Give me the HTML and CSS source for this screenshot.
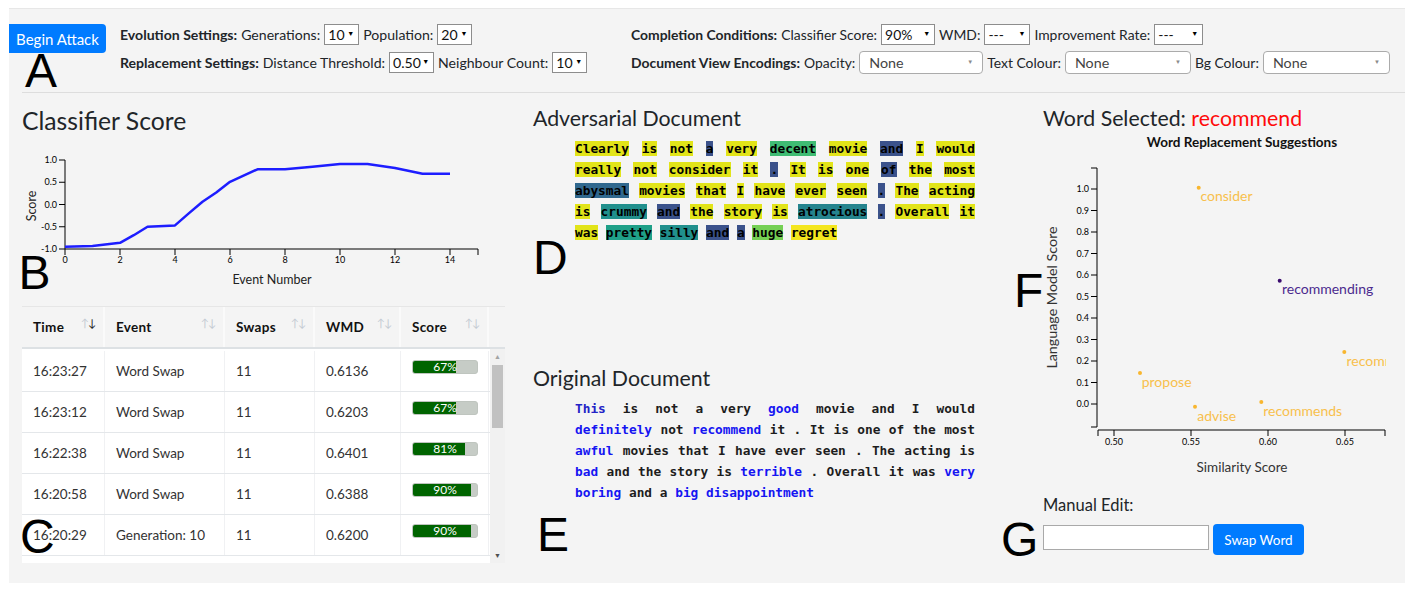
FILE: index.html
```html
<!DOCTYPE html>
<html lang="en">
<head>
<meta charset="utf-8">
<title>Adversarial Attack Dashboard</title>
<link rel="stylesheet" href="styles.css">
</head>
<body>
<div class="page">
  <header class="toolbar">
    <button class="btn btn-begin">Begin Attack</button>
    <div class="settings settings-left">
      <div class="setting-row">
        <b>Evolution Settings:</b><span>Generations:</span>
        <span class="sel w35">10<span class="caret">▼</span></span>
        <span>Population:</span>
        <span class="sel w35">20<span class="caret">▼</span></span>
      </div>
      <div class="setting-row">
        <b>Replacement Settings:</b><span>Distance Threshold:</span>
        <span class="sel w45">0.50<span class="caret">▼</span></span>
        <span>Neighbour Count:</span>
        <span class="sel w35">10<span class="caret">▼</span></span>
      </div>
    </div>
    <div class="settings settings-right">
      <div class="setting-row">
        <b>Completion Conditions:</b><span>Classifier Score:</span>
        <span class="sel w54">90%<span class="caret">▼</span></span>
        <span>WMD:</span>
        <span class="sel w46">---<span class="caret">▼</span></span>
        <span>Improvement Rate:</span>
        <span class="sel w49">---<span class="caret">▼</span></span>
      </div>
      <div class="setting-row">
        <b>Document View Encodings:</b><span>Opacity:</span>
        <span class="sel sel-round w124">None<span class="caret">▼</span></span>
        <span>Text Colour:</span>
        <span class="sel sel-round w126">None<span class="caret">▼</span></span>
        <span>Bg Colour:</span>
        <span class="sel sel-round w127">None<span class="caret">▼</span></span>
      </div>
    </div>
  </header>
  <div class="divider"></div>

  <main class="main">
    <section class="col col-left">
      <h2 class="heading heading-lg">Classifier Score</h2>
      <svg class="chart" width="483" height="150" viewBox="0 0 483 150">
        <g class="axis">
          <path d="M37,15 H43 V104 H37" fill="none" stroke="#000"/>
          <line x1="37" y1="37.25" x2="43" y2="37.25" stroke="#000"/>
          <line x1="37" y1="59.5" x2="43" y2="59.5" stroke="#000"/>
          <line x1="37" y1="81.75" x2="43" y2="81.75" stroke="#000"/>
          <text x="35" y="18" text-anchor="end">1.0</text>
          <text x="35" y="40.25" text-anchor="end">0.5</text>
          <text x="35" y="62.5" text-anchor="end">0.0</text>
          <text x="35" y="84.75" text-anchor="end">-0.5</text>
          <text x="35" y="107" text-anchor="end">-1.0</text>
          <path d="M43,110 V104 H456 V110" fill="none" stroke="#000"/>
          <line x1="98" y1="104" x2="98" y2="110" stroke="#000"/>
          <line x1="153" y1="104" x2="153" y2="110" stroke="#000"/>
          <line x1="208" y1="104" x2="208" y2="110" stroke="#000"/>
          <line x1="263" y1="104" x2="263" y2="110" stroke="#000"/>
          <line x1="318" y1="104" x2="318" y2="110" stroke="#000"/>
          <line x1="373" y1="104" x2="373" y2="110" stroke="#000"/>
          <line x1="428" y1="104" x2="428" y2="110" stroke="#000"/>
          <text x="43" y="118" text-anchor="middle">0</text>
          <text x="98" y="118" text-anchor="middle">2</text>
          <text x="153" y="118" text-anchor="middle">4</text>
          <text x="208" y="118" text-anchor="middle">6</text>
          <text x="263" y="118" text-anchor="middle">8</text>
          <text x="318" y="118" text-anchor="middle">10</text>
          <text x="373" y="118" text-anchor="middle">12</text>
          <text x="428" y="118" text-anchor="middle">14</text>
        </g>
        <text class="axis-title" transform="translate(13.5,61) rotate(-90)" text-anchor="middle">Score</text>
        <text class="axis-title" x="250" y="139" text-anchor="middle">Event Number</text>
        <polyline class="score-line" points="43,101.8 70.5,100.9 98,97.8 111.75,90.2 125.5,81.75 153,80.4 166.75,68.4 180.5,56.8 194.25,47.5 208,36.8 235.5,24.3 263,24.3 290.5,21.7 318,19 345.5,19 373,23 400.5,28.8 428,28.8"/>
      </svg>

      <div class="table">
        <div class="thead">
          <div class="th">Time<span class="sort"><span>↑</span><span class="sort-on">↓</span></span></div>
          <div class="th">Event<span class="sort"><span>↑</span><span>↓</span></span></div>
          <div class="th">Swaps<span class="sort"><span>↑</span><span>↓</span></span></div>
          <div class="th">WMD<span class="sort"><span>↑</span><span>↓</span></span></div>
          <div class="th">Score<span class="sort"><span>↑</span><span>↓</span></span></div>
        </div>
        <div class="tbody">
          <div class="rows">
            <div class="tr"><div class="td">16:23:27</div><div class="td">Word Swap</div><div class="td">11</div><div class="td">0.6136</div><div class="td td-score"><div class="bar"><div class="bar-fill" style="width:67%"></div><span class="bar-label">67%</span></div></div></div>
            <div class="tr"><div class="td">16:23:12</div><div class="td">Word Swap</div><div class="td">11</div><div class="td">0.6203</div><div class="td td-score"><div class="bar"><div class="bar-fill" style="width:67%"></div><span class="bar-label">67%</span></div></div></div>
            <div class="tr"><div class="td">16:22:38</div><div class="td">Word Swap</div><div class="td">11</div><div class="td">0.6401</div><div class="td td-score"><div class="bar"><div class="bar-fill" style="width:81%"></div><span class="bar-label">81%</span></div></div></div>
            <div class="tr"><div class="td">16:20:58</div><div class="td">Word Swap</div><div class="td">11</div><div class="td">0.6388</div><div class="td td-score"><div class="bar"><div class="bar-fill" style="width:90%"></div><span class="bar-label">90%</span></div></div></div>
            <div class="tr"><div class="td">16:20:29</div><div class="td">Generation: 10</div><div class="td">11</div><div class="td">0.6200</div><div class="td td-score"><div class="bar"><div class="bar-fill" style="width:90%"></div><span class="bar-label">90%</span></div></div></div>
          </div>
          <div class="scrollbar" aria-hidden="true">
            <span class="sb-btn sb-up">▲</span>
            <span class="sb-track"><span class="sb-thumb"></span></span>
            <span class="sb-btn sb-down">▼</span>
          </div>
        </div>
      </div>
    </section>

    <section class="col col-mid">
      <h2 class="heading">Adversarial Document</h2>
      <p class="doc-text"><span class="v-y">Clearly</span> <span class="v-y">is</span> <span class="v-y">not</span> <span class="v-d">a</span> <span class="v-y">very</span> <span class="v-g">decent</span> <span class="v-y">movie</span> <span class="v-d">and</span> <span class="v-y">I</span> <span class="v-y">would</span> <span class="v-y">really</span> <span class="v-y">not</span> <span class="v-y">consider</span> <span class="v-y">it</span> <span class="v-d">.</span> <span class="v-y">It</span> <span class="v-y">is</span> <span class="v-y">one</span> <span class="v-d">of</span> <span class="v-y">the</span> <span class="v-y">most</span> <span class="v-b">abysmal</span> <span class="v-y">movies</span> <span class="v-y">that</span> <span class="v-y">I</span> <span class="v-y">have</span> <span class="v-y">ever</span> <span class="v-y">seen</span> <span class="v-d">.</span> <span class="v-y">The</span> <span class="v-y">acting</span> <span class="v-y">is</span> <span class="v-t">crummy</span> <span class="v-d">and</span> <span class="v-y">the</span> <span class="v-y">story</span> <span class="v-y">is</span> <span class="v-t2">atrocious</span> <span class="v-d">.</span> <span class="v-y">Overall</span> <span class="v-y">it</span> <span class="v-y">was</span> <span class="v-t3">pretty</span> <span class="v-t">silly</span> <span class="v-d">and</span> <span class="v-d">a</span> <span class="v-lg">huge</span> <span class="v-y2">regret</span></p>

      <h2 class="heading heading-original">Original Document</h2>
      <p class="doc-text doc-plain"><span class="o-b o-dk">This</span> is not a very <span class="o-b">good</span> movie and I would <span class="o-b">definitely</span> not <span class="o-b">recommend</span> it . It is one of the most <span class="o-b">awful</span> movies that I have ever seen . The acting is <span class="o-b">bad</span> and the story is <span class="o-b">terrible</span> . Overall it was <span class="o-b">very</span> <span class="o-b">boring</span> and a <span class="o-b">big</span> <span class="o-b">disappointment</span></p>
    </section>

    <section class="col col-right">
      <h2 class="heading">Word Selected: <span class="selected-word">recommend</span></h2>
      <svg class="scatter" width="343" height="345" viewBox="0 0 343 345">
        <text class="scatter-title" x="199" y="12" text-anchor="middle">Word Replacement Suggestions</text>
        <g class="axis">
          <path d="M48,33 H54 V292 H48" fill="none" stroke="#000"/>
          <line x1="48" y1="269" x2="54" y2="269" stroke="#000"/>
          <line x1="48" y1="247.5" x2="54" y2="247.5" stroke="#000"/>
          <line x1="48" y1="226" x2="54" y2="226" stroke="#000"/>
          <line x1="48" y1="204.5" x2="54" y2="204.5" stroke="#000"/>
          <line x1="48" y1="183" x2="54" y2="183" stroke="#000"/>
          <line x1="48" y1="161.5" x2="54" y2="161.5" stroke="#000"/>
          <line x1="48" y1="140" x2="54" y2="140" stroke="#000"/>
          <line x1="48" y1="118.5" x2="54" y2="118.5" stroke="#000"/>
          <line x1="48" y1="97" x2="54" y2="97" stroke="#000"/>
          <line x1="48" y1="75.5" x2="54" y2="75.5" stroke="#000"/>
          <line x1="48" y1="54" x2="54" y2="54" stroke="#000"/>
          <text x="46" y="272" text-anchor="end">0.0</text>
          <text x="46" y="250.5" text-anchor="end">0.1</text>
          <text x="46" y="229" text-anchor="end">0.2</text>
          <text x="46" y="207.5" text-anchor="end">0.3</text>
          <text x="46" y="186" text-anchor="end">0.4</text>
          <text x="46" y="164.5" text-anchor="end">0.5</text>
          <text x="46" y="143" text-anchor="end">0.6</text>
          <text x="46" y="121.5" text-anchor="end">0.7</text>
          <text x="46" y="100" text-anchor="end">0.8</text>
          <text x="46" y="78.5" text-anchor="end">0.9</text>
          <text x="46" y="57" text-anchor="end">1.0</text>
          <path d="M55,301 V295 H342 V301" fill="none" stroke="#000"/>
          <line x1="71" y1="295" x2="71" y2="301" stroke="#000"/>
          <line x1="148" y1="295" x2="148" y2="301" stroke="#000"/>
          <line x1="225" y1="295" x2="225" y2="301" stroke="#000"/>
          <line x1="302" y1="295" x2="302" y2="301" stroke="#000"/>
          <text x="71" y="310" text-anchor="middle">0.50</text>
          <text x="148" y="310" text-anchor="middle">0.55</text>
          <text x="225" y="310" text-anchor="middle">0.60</text>
          <text x="302" y="310" text-anchor="middle">0.65</text>
        </g>
        <text class="axis-title scatter-axis scatter-y" transform="translate(14,162.5) rotate(-90)" text-anchor="middle">Language Model Score</text>
        <text class="axis-title scatter-axis" x="199" y="337" text-anchor="middle">Similarity Score</text>
        <g class="points">
          <circle cx="155.7" cy="52.7" r="2" class="pt"/>
          <text x="157.5" y="66" class="pt-label">consider</text>
          <circle cx="236.7" cy="145.7" r="2" class="pt pt-sel"/>
          <text x="239" y="159" class="pt-label pt-label-sel">recommending</text>
          <circle cx="301.3" cy="217" r="2" class="pt"/>
          <text x="303.5" y="230.5" class="pt-label">recommended</text>
          <circle cx="97" cy="238" r="2" class="pt"/>
          <text x="98.7" y="251.5" class="pt-label">propose</text>
          <circle cx="152" cy="271.7" r="2" class="pt"/>
          <text x="154.3" y="285.5" class="pt-label">advise</text>
          <circle cx="218.3" cy="267" r="2" class="pt"/>
          <text x="220.3" y="281" class="pt-label">recommends</text>
        </g>
      </svg>
      <div class="manual-label">Manual Edit:</div>
      <div class="manual-row">
        <input class="manual-input" type="text" aria-label="Manual edit">
        <button class="btn btn-swap">Swap Word</button>
      </div>
    </section>
  </main>

  <span class="marker marker-a">A</span>
  <span class="marker marker-b">B</span>
  <span class="marker marker-c">C</span>
  <span class="marker marker-d">D</span>
  <span class="marker marker-e">E</span>
  <span class="marker marker-f">F</span>
  <span class="marker marker-g">G</span>
</div>
</body>
</html>
```

FILE: styles.css
```css
* { box-sizing: border-box; }

body {
  margin: 0;
  background: #fff;
  font-family: "Lato", "Open Sans", sans-serif;
  color: #212529;
}

.page {
  position: relative;
  margin: 8px 11px 0 9px;
  height: 575px;
  background: #f4f4f4;
  border-top: 1px solid #e7e7e7;
}

/* ---------- toolbar ---------- */
.toolbar {
  display: flex;
  align-items: flex-start;
  height: 83px;
  padding-top: 14px;
}

.btn {
  border: none;
  color: #fff;
  background: #007bff;
  font-family: inherit;
  cursor: pointer;
}

.btn-begin {
  width: 97px;
  height: 29px;
  margin-top: 1px;
  border-radius: 0 4px 4px 0;
  font-size: 15px;
  padding: 0;
}

.settings {
  display: flex;
  flex-direction: column;
  gap: 6px;
}

.settings-left {
  margin-left: 14px;
  width: 511px;
  font-size: 14.1px;
}

.settings-right {
  font-size: 13.9px;
}

.setting-row {
  display: flex;
  align-items: center;
  gap: 4px;
  height: 22px;
  white-space: nowrap;
}

.setting-row b { font-weight: 700; }

.sel {
  display: inline-flex;
  align-items: center;
  justify-content: space-between;
  height: 21px;
  padding: 0 4px 0 3px;
  border: 1px solid #8d8d8d;
  background: #fff;
  color: #111;
}

.caret {
  font-size: 7px;
  color: #000;
  margin-top: -2px;
}

.sel-round {
  height: 23px;
  border-color: #ababab;
  border-radius: 4px;
  padding: 0 9px 0 9px;
  color: #444;
  font-size: 14.3px;
}

.sel-round .caret { color: #8a8a8a; font-size: 6px; }

.w35 { width: 35px; }
.w45 { width: 45px; }
.w46 { width: 46px; }
.w49 { width: 49px; }
.w54 { width: 54px; }
.w124 { width: 124px; }
.w126 { width: 126px; }
.w127 { width: 127px; }

.divider {
  margin-left: 13px;
  height: 1px;
  background: #dddddd;
}

/* ---------- main ---------- */
.main {
  display: flex;
  padding-top: 13px;
}

.heading {
  margin: 0;
  font-size: 21.3px;
  line-height: 24px;
  font-weight: 400;
  color: #212529;
}

.heading-lg {
  font-size: 24.7px;
  line-height: 29px;
}

.col-left {
  margin-left: 13px;
  width: 483px;
}

.chart {
  display: block;
  margin-top: 10px;
}

.axis text {
  font-family: "Lato", sans-serif;
  font-size: 9px;
  fill: #000;
}

.axis-title {
  font-family: "Lato", sans-serif;
  font-size: 12.5px;
  fill: #222;
}

.score-line {
  fill: none;
  stroke: #1d1dff;
  stroke-width: 2.5;
  stroke-linejoin: round;
}

/* ---------- table ---------- */
.table {
  margin-top: 11px;
  width: 483px;
}

.thead {
  display: grid;
  grid-template-columns: 83px 120px 90px 86px 88px;
  height: 43px;
  border-top: 1px solid #e6e6e6;
  border-bottom: 2px solid #dde1e4;
}

.th {
  display: flex;
  align-items: center;
  justify-content: space-between;
  padding: 0 8px 0 11px;
  font-size: 13.5px;
  font-weight: 700;
  color: #111;
  letter-spacing: 0.3px;
  border-right: 2px solid #fafafa;
}

.sort {
  display: flex;
  font-size: 11px;
  font-weight: 400;
  color: #c4cbd3;
  margin-top: -10px;
  letter-spacing: -1px;
}

.sort-on { color: #222; }

.tbody {
  display: flex;
  height: 214px;
  background: #fff;
}

.rows {
  width: 468px;
  height: 214px;
  padding-top: 2px;
  overflow: hidden;
}

.scrollbar {
  display: flex;
  flex-direction: column;
  width: 15px;
  background: #f1f1f1;
}

.sb-btn {
  display: flex;
  align-items: center;
  justify-content: center;
  height: 15px;
  font-size: 7px;
  line-height: 1;
}

.sb-up { color: #a3a3a3; }
.sb-down { color: #505050; }

.sb-track {
  flex: 1;
  display: flex;
  flex-direction: column;
  padding: 1px 2px 0;
}

.sb-thumb {
  height: 63px;
  background: #c1c1c1;
}

.tr {
  display: grid;
  grid-template-columns: 83px 120px 90px 86px 88px;
  height: 41px;
  border-bottom: 1px solid #e4e7ea;
}

.td {
  display: flex;
  align-items: center;
  padding-left: 11px;
  font-size: 13.5px;
  color: #333;
  border-right: 1px solid #f0f1f3;
  white-space: nowrap;
}

.td-score {
  align-items: flex-start;
  padding-top: 9px;
}

.bar {
  position: relative;
  width: 66px;
  height: 14px;
  background: #c6ccc6;
  border: 1px solid #bfc5bf;
  border-radius: 3px;
  overflow: hidden;
}

.bar-fill {
  height: 100%;
  background: #006400;
}

.bar-label {
  position: absolute;
  inset: 0;
  text-align: center;
  color: #fff;
  font-size: 12px;
  line-height: 12px;
}

/* ---------- documents ---------- */
.col-mid {
  margin-left: 28px;
  width: 442px;
}

.doc-text {
  margin: 7.5px 0 0 42px;
  width: 400px;
  font-family: "DejaVu Sans Mono", "Liberation Mono", monospace;
  font-weight: 700;
  font-size: 12.8px;
  line-height: 21px;
  text-align: justify;
  color: #000;
}

.heading-original { margin-top: 123.5px; }

.doc-plain { color: #1d1d1d; }

.v-y  { background: #e2e419; }
.v-y2 { background: #f4e61e; }
.v-g  { background: #3fbc73; }
.v-lg { background: #75d054; }
.v-d  { background: #3b528b; }
.v-b  { background: #30688e; }
.v-t  { background: #21908d; }
.v-t2 { background: #25848e; }
.v-t3 { background: #1fa088; }

.o-b  { color: #1515f2; }
.o-dk { color: #2323c6; }

/* ---------- right column ---------- */
.col-right {
  margin-left: 68px;
  width: 362px;
}

.selected-word { color: #ff0a0a; }

.scatter {
  display: block;
  margin-top: 5px;
}

.scatter-title {
  font-family: "Lato", sans-serif;
  font-size: 13.5px;
  font-weight: 700;
  fill: #111;
}

.scatter-axis {
  font-size: 13.5px;
  fill: #333;
}

.scatter-y { font-size: 14.3px; }

.pt { fill: #f8b62f; }
.pt-sel { fill: #3a0b6e; }

.pt-label {
  font-family: "Lato", sans-serif;
  font-size: 14px;
  fill: #f8c04c;
}

.pt-label-sel { fill: #4b2a8e; }

.manual-label {
  margin-top: 16px;
  font-size: 16.5px;
  line-height: 19px;
}

.manual-row {
  display: flex;
  align-items: flex-start;
  gap: 4px;
  margin-top: 9px;
}

.manual-input {
  width: 166px;
  height: 25px;
  margin-top: 1px;
  border: 1px solid #a9a9a9;
  background: #fff;
  font-family: inherit;
}

.btn-swap {
  width: 91px;
  height: 31px;
  border-radius: 4px;
  font-size: 13.5px;
}

/* ---------- annotation markers ---------- */
.marker {
  position: absolute;
  font-family: "Liberation Sans", Arial, sans-serif;
  font-size: 48px;
  line-height: 48px;
  color: #000;
  pointer-events: none;
}

.marker-a { left: 16px; top: 38px; }
.marker-b { left: 9.5px; top: 240px; }
.marker-c { left: 11px; top: 504px; }
.marker-d { left: 524px; top: 225px; }
.marker-e { left: 528px; top: 502px; }
.marker-f { left: 1005px; top: 258px; }
.marker-g { left: 992px; top: 507px; }
```
